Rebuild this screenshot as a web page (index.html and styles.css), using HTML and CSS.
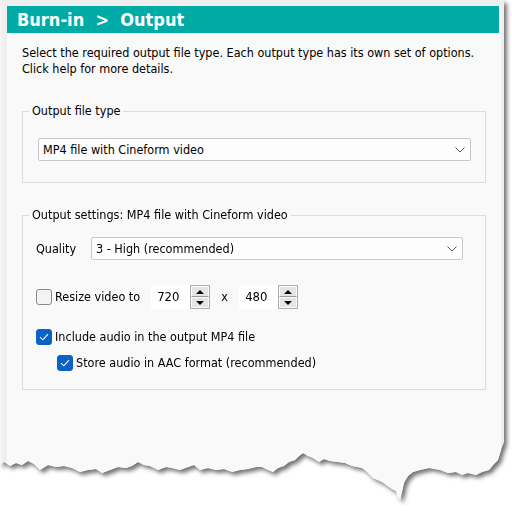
FILE: index.html
```html
<!DOCTYPE html>
<html lang="en">
<head>
  <meta charset="UTF-8" />
  <title>Burn-in - Output</title>
  <link rel="stylesheet" href="styles.css">
</head>
<body>
  <div class="shot">
    <div class="window">
      <div class="page">
        <div class="header">Burn-in  &gt;  Output</div>
        <p class="intro">Select the required output file type. Each output type has its own set of options.<br>Click help for more details.</p>

        <fieldset class="group first">
          <legend>Output file type</legend>
          <div class="body">
            <div class="select">
              <span>MP4 file with Cineform video</span>
              <svg class="chevron" width="10" height="6" viewBox="0 0 10 6"><path d="M0.5 0.5 L5 5 L9.5 0.5" fill="none" stroke="#555" stroke-width="1"/></svg>
            </div>
          </div>
        </fieldset>

        <fieldset class="group second">
          <legend>Output settings: MP4 file with Cineform video</legend>
          <div class="body">
            <div class="row quality">
              <span class="label">Quality</span>
              <div class="select">
                <span>3 - High (recommended)</span>
                <svg class="chevron" width="10" height="6" viewBox="0 0 10 6"><path d="M0.5 0.5 L5 5 L9.5 0.5" fill="none" stroke="#555" stroke-width="1"/></svg>
              </div>
            </div>

            <div class="row resize">
              <span class="check"></span>
              <span class="text">Resize video to</span>
              <div class="spin">
                <span class="value">720</span>
                <span class="arrows"><span class="up"></span><span class="down"></span></span>
              </div>
              <span class="times">x</span>
              <div class="spin">
                <span class="value">480</span>
                <span class="arrows"><span class="up"></span><span class="down"></span></span>
              </div>
            </div>

            <div class="row option">
              <span class="check on"><svg width="10" height="8" viewBox="0 0 10 8"><path d="M1 4.2 L3.8 6.8 L9 1.2" fill="none" stroke="#fff" stroke-width="1.1"/></svg></span>
              <span class="text">Include audio in the output MP4 file</span>
            </div>

            <div class="row option sub">
              <span class="check on"><svg width="10" height="8" viewBox="0 0 10 8"><path d="M1 4.2 L3.8 6.8 L9 1.2" fill="none" stroke="#fff" stroke-width="1.1"/></svg></span>
              <span class="text">Store audio in AAC format (recommended)</span>
            </div>
          </div>
        </fieldset>
      </div>
    </div>
  </div>
</body>
</html>
```

FILE: styles.css
```css
* {
  box-sizing: border-box;
  margin: 0;
  padding: 0;
}

body {
  background: #fff;
  font-family: "DejaVu Sans Condensed", "DejaVu Sans", sans-serif;
  font-size: 12.5px;
  line-height: 16px;
  color: #000;
}

/* screenshot with torn bottom edge */
.shot {
  width: 504px;
  filter: drop-shadow(3px 3px 2px rgba(0, 0, 0, 0.55));
}

.window {
  height: 506px;
  background: #efefef;
  border-left: 2px solid #f5f5f5;
  padding: 6px 3px 0 5px;
  clip-path: polygon(
    0 0, 504px 0, 504px 442px, 501px 450px, 498px 460px, 494px 464px, 489px 470px,
    482px 472px, 476px 475px, 468px 473px, 462px 475px, 456px 472px, 448px 473px,
    440px 470px, 429px 468px, 420px 470px, 413px 472px, 408px 476px, 404px 483px,
    402px 492px, 400px 500px, 397px 495px, 396px 491px, 392px 489px, 389px 487px,
    382px 482px, 373px 478px, 366px 471px, 362px 468px, 352px 466px, 345px 463px,
    338px 462px, 330px 461px, 324px 459px, 319px 462px, 313px 458px, 308px 456px,
    303px 453px, 299px 456px, 295px 460px, 289px 462px, 284px 466px, 278px 468px,
    273px 472px, 268px 470px, 262px 467px, 256px 467px, 248px 469px, 240px 470px,
    232px 472px, 224px 469px, 216px 470px, 208px 468px, 200px 470px, 194px 465px,
    188px 467px, 180px 470px, 172px 468px, 166px 467px, 158px 470px, 150px 466px,
    144px 465px, 138px 462px, 132px 466px, 126px 468px, 118px 467px, 110px 470px,
    102px 473px, 96px 469px, 88px 470px, 80px 472px, 72px 468px, 64px 466px,
    56px 467px, 48px 465px, 40px 470px, 34px 464px, 28px 461px, 22px 465px,
    16px 463px, 10px 466px, 4px 462px, 0 465px
  );
}

.page {
  height: 100%;
  background: #f9f9f9;
  padding-right: 2px;
}

.header {
  height: 27px;
  background: #00aaa5;
  color: #fff;
  font-weight: bold;
  font-size: 18px;
  line-height: 27px;
  padding-left: 10px;
  white-space: pre;
}

.intro {
  margin: 12px 0 0 15px;
}

.group {
  border: 1px solid #dcdcdc;
  margin: 0 13px 0 15px;
}

.group legend {
  margin-left: 6px;
  padding: 0 3px;
}

.group.first {
  margin-top: 26px;
}

.group.first .body {
  padding: 19px 14px 21px 15px;
}

.group.second {
  margin-top: 24px;
}

.group.second .body {
  padding: 14px 22px 18px 13px;
}

.select {
  height: 23px;
  background: #fdfdfd;
  border: 1px solid #c8c8c8;
  border-radius: 2px;
  display: flex;
  align-items: center;
  justify-content: space-between;
  padding: 0 5px 0 4px;
}

.row {
  display: flex;
  align-items: center;
}

.quality .label {
  width: 55px;
}

.quality .select {
  flex: 1;
}

.resize {
  margin-top: 25px;
}

.check {
  width: 16px;
  height: 16px;
  border: 1px solid #8a8a8a;
  border-radius: 3px;
  background: #f3f3f3;
  display: flex;
  align-items: center;
  justify-content: center;
}

.check.on {
  background: #0a62c4;
  border-color: #0a62c4;
}

.row .text {
  margin-left: 3px;
}

.spin {
  display: flex;
  height: 24px;
  margin-left: 11px;
}

.spin .value {
  width: 39px;
  background: #fff;
  padding-left: 6px;
  line-height: 24px;
  font-size: 13px;
}

.spin .arrows {
  width: 20px;
  border: 1px solid #adadad;
  display: flex;
  flex-direction: column;
}

.spin .up,
.spin .down {
  flex: 1;
  background: #e5e5e5;
  border: 1px solid #fbfbfb;
  position: relative;
}

.spin .up {
  border-bottom: 1px solid #9a9a9a;
}

.spin .up::after,
.spin .down::after {
  content: "";
  position: absolute;
  left: 4px;
  border-left: 4px solid transparent;
  border-right: 4px solid transparent;
}

.spin .up::after {
  top: 3px;
  border-bottom: 4px solid #000;
}

.spin .down::after {
  top: 3px;
  border-top: 4px solid #000;
}

.times {
  margin-left: 11px;
  width: 18px;
}

.spin + .times + .spin {
  margin-left: 0;
}

.option {
  margin-top: 20px;
}

.option.sub {
  margin-top: 10px;
  padding-left: 21px;
}
```
